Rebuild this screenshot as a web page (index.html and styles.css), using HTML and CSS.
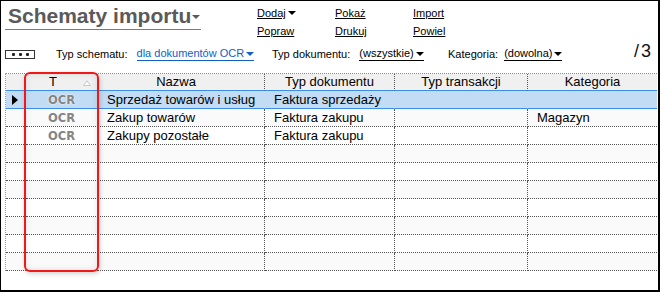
FILE: index.html
```html
<!DOCTYPE html>
<html lang="pl">
<head>
<meta charset="UTF-8">
<title>Schematy importu</title>
<link rel="stylesheet" href="styles.css">
</head>
<body>
<div class="window">
    <div class="top">
        <div class="title-box">
            <h1 class="title">Schematy importu</h1>
            <span class="caret caret-title"></span>
        </div>
        <div class="actions">
            <span class="act"><a>Dodaj</a><span class="caret"></span></span>
            <span class="act"><a>Pokaż</a></span>
            <span class="act"><a>Import</a></span>
            <span class="act"><a>Popraw</a></span>
            <span class="act"><a>Drukuj</a></span>
            <span class="act"><a>Powiel</a></span>
        </div>
    </div>

    <div class="filters">
        <div class="more"><i></i><i></i><i></i></div>
        <div class="filter f-schema">
            <span class="lbl">Typ schematu:</span>
            <a class="pick pick-blue">dla dokumentów OCR<span class="caret"></span></a>
        </div>
        <div class="filter f-doc">
            <span class="lbl">Typ dokumentu:</span>
            <a class="pick">(wszystkie)<span class="caret"></span></a>
        </div>
        <div class="filter f-cat">
            <span class="lbl">Kategoria:</span>
            <a class="pick">(dowolna)<span class="caret"></span></a>
        </div>
        <div class="count">/3</div>
    </div>

    <div class="grid">
        <table>
            <thead>
                <tr>
                    <th class="c-ind"></th>
                    <th class="c-t">T<svg class="sort" width="8" height="6" viewBox="0 0 8 6"><path d="M0.5 5.5 L4 0.8 L7.5 5.5 Z" fill="#fff" stroke="#c8c8c8" stroke-width="1"/></svg></th>
                    <th class="c-name">Nazwa</th>
                    <th class="c-doc">Typ dokumentu</th>
                    <th class="c-trans">Typ transakcji</th>
                    <th class="c-cat">Kategoria</th>
                </tr>
            </thead>
            <tbody>
                <tr class="selected">
                    <td class="c-ind"><span class="pointer"></span></td>
                    <td class="c-t"><span class="ocr">OCR</span></td>
                    <td>Sprzedaż towarów i usług</td>
                    <td>Faktura sprzedaży</td>
                    <td></td>
                    <td></td>
                </tr>
                <tr>
                    <td class="c-ind"></td>
                    <td class="c-t"><span class="ocr">OCR</span></td>
                    <td>Zakup towarów</td>
                    <td>Faktura zakupu</td>
                    <td></td>
                    <td>Magazyn</td>
                </tr>
                <tr>
                    <td class="c-ind"></td>
                    <td class="c-t"><span class="ocr">OCR</span></td>
                    <td>Zakupy pozostałe</td>
                    <td>Faktura zakupu</td>
                    <td></td>
                    <td></td>
                </tr>
                <tr><td class="c-ind"></td><td class="c-t"></td><td></td><td></td><td></td><td></td></tr>
                <tr><td class="c-ind"></td><td class="c-t"></td><td></td><td></td><td></td><td></td></tr>
                <tr><td class="c-ind"></td><td class="c-t"></td><td></td><td></td><td></td><td></td></tr>
                <tr><td class="c-ind"></td><td class="c-t"></td><td></td><td></td><td></td><td></td></tr>
                <tr><td class="c-ind"></td><td class="c-t"></td><td></td><td></td><td></td><td></td></tr>
                <tr><td class="c-ind"></td><td class="c-t"></td><td></td><td></td><td></td><td></td></tr>
                <tr><td class="c-ind"></td><td class="c-t"></td><td></td><td></td><td></td><td></td></tr>
            </tbody>
        </table>
        <div class="highlight"></div>
    </div>
</div>
</body>
</html>
```

FILE: styles.css
```css
/* Schematy importu window */
html, body {
    margin: 0;
    padding: 0;
    background: #fff;
}
.window {
    box-sizing: border-box;
    width: 660px;
    height: 292px;
    border-top: 1px solid #000;
    border-left: 1px solid #000;
    border-right: 2px solid #000;
    border-bottom: 2px solid #000;
    font-family: "Liberation Sans", Arial, sans-serif;
    color: #000;
    background: #fff;
}

/* title + action links */
.top {
    display: flex;
    height: 29px;
}
.title-box {
    display: flex;
    align-items: center;
    box-sizing: border-box;
    width: 196px;
    height: 29px;
    margin-left: 4px;
    padding-left: 3px;
    border-bottom: 1px solid #7a7a7a;
}
.title {
    margin: 0;
    font-size: 21px;
    line-height: 24px;
    font-weight: bold;
    color: #5a5a5a;
    padding-top: 2px;
}
.caret {
    display: inline-block;
    width: 0;
    height: 0;
    border-left: 4px solid transparent;
    border-right: 4px solid transparent;
    border-top: 4px solid #000;
    margin-left: 2px;
    vertical-align: 2px;
}
.caret-title {
    border-top-color: #5a5a5a;
    margin-left: 1px;
    margin-top: 3px;
}
.actions {
    display: grid;
    grid-template-columns: 78px 78px 78px;
    grid-auto-rows: 18px;
    margin-left: 56px;
    padding-top: 3px;
    font-size: 11px;
    line-height: 18px;
}
.act a {
    text-decoration: underline;
    color: #000;
}

/* filter line */
.filters {
    display: flex;
    align-items: center;
    height: 18px;
    margin-top: 15px;
    font-size: 11px;
    line-height: 18px;
}
.more {
    display: flex;
    align-items: center;
    justify-content: center;
    gap: 4px;
    box-sizing: border-box;
    width: 30px;
    height: 9px;
    margin-left: 4px;
    border: 1px solid #333;
}
.more i {
    width: 3px;
    height: 3px;
    border-radius: 1px;
    background: #222;
}
.filter {
    display: flex;
    gap: 9px;
}
.f-schema {
    margin-left: 21px;
    width: 216px;
}
.f-doc {
    width: 176px;
}
.f-cat {
    flex: 1;
    gap: 6px;
}
.pick {
    color: #000;
    border-bottom: 1px solid #000;
    line-height: 13px;
    align-self: center;
}
.pick .caret {
    margin-left: 2px;
    vertical-align: 1px;
}
.pick-blue {
    color: #1060c8;
    border-bottom-color: #1060c8;
}
.pick-blue .caret {
    border-top-color: #1060c8;
}
.count {
    margin-right: 5px;
    font-size: 18px;
    letter-spacing: 2px;
    color: #111;
    margin-top: -6px;
}

/* grid */
.grid {
    position: relative;
    width: 652px;
    margin-top: 10px;
    margin-left: 4px;
}
table {
    width: 652px;
    table-layout: fixed;
    border-collapse: separate;
    border-spacing: 0;
    border-top: 1px dotted #8a8a8a;
    border-left: 1px dotted #9a9a9a;
    font-size: 13px;
}
th, td {
    box-sizing: border-box;
    padding: 0;
    white-space: nowrap;
    overflow: hidden;
    border-right: 1px dotted #555;
    border-bottom: 1px dotted #555;
}
th:last-child, td:last-child {
    border-right: none;
}
thead tr {
    height: 17px;
}
th {
    background: #f0f0f0;
    font-weight: normal;
    line-height: 16px;
    text-align: center;
    border-bottom: 1px solid #3b8ee3;
}
th.c-t {
    position: relative;
    padding-right: 17px;
}
th.c-name {
    padding-right: 10px;
}
.sort {
    position: absolute;
    right: 6px;
    top: 6px;
}
.c-ind { width: 20px; }
.c-t { width: 72px; text-align: center; }
.c-name { width: 167px; }
.c-doc { width: 130px; }
.c-trans { width: 133px; }
.c-cat { width: 129px; }
tbody tr {
    height: 18px;
}
td {
    line-height: 16px;
    padding-left: 9px;
}
td.c-ind, td.c-t {
    padding-left: 0;
}
tbody tr:nth-child(even) td {
    background: #fafafa;
}
tr.selected td {
    background: #c1dcf4;
    border-bottom: 1px solid #3b8ee3;
    border-right-color: transparent;
}
.pointer {
    display: block;
    width: 0;
    height: 0;
    margin-left: 6px;
    border-top: 5px solid transparent;
    border-bottom: 5px solid transparent;
    border-left: 6px solid #000;
}
.ocr {
    font-family: "DejaVu Sans", Verdana, sans-serif;
    font-size: 11.5px;
    font-weight: bold;
    color: #858585;
    text-shadow: 0 0 2px #fff, 0 0 1px #fff;
}

/* red marker round the T column */
.highlight {
    position: absolute;
    left: 19px;
    top: -1px;
    width: 75px;
    height: 200px;
    box-sizing: border-box;
    border: 2px solid #f01818;
    border-radius: 6px;
    box-shadow: 1px 2px 5px rgba(0,0,0,0.18), inset 0 0 6px rgba(0,0,0,0.1);
    pointer-events: none;
}
```
